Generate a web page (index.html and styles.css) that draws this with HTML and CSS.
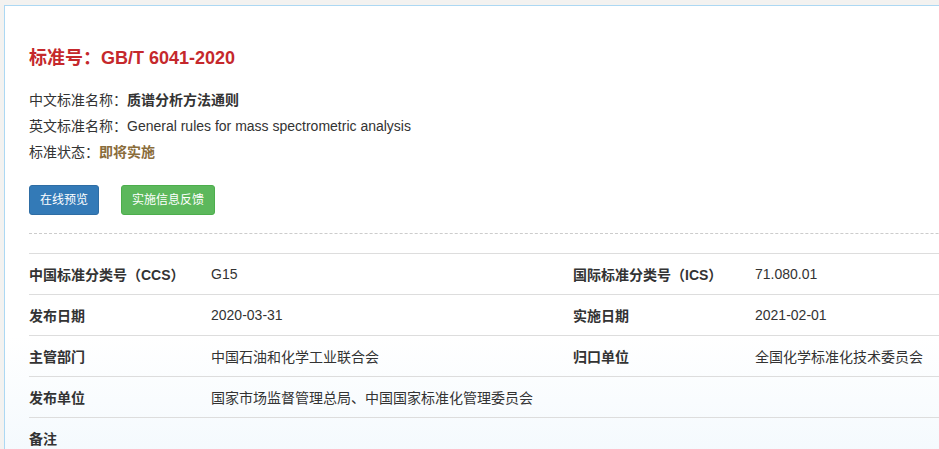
FILE: index.html
```html
<!DOCTYPE html>
<html lang="zh">
<head>
<meta charset="utf-8">
<link rel="stylesheet" href="styles.css">
</head>
<body>
<div class="page">
  <div class="panel">
    <h1 class="title">标准号：GB/T 6041-2020</h1>
    <div class="info">
      <p class="line">中文标准名称：<b>质谱分析方法通则</b></p>
      <p class="line">英文标准名称：General rules for mass spectrometric analysis</p>
      <p class="line">标准状态：<b class="status">即将实施</b></p>
    </div>
    <div class="actions">
      <a class="btn btn-blue">在线预览</a>
      <a class="btn btn-green">实施信息反馈</a>
    </div>
    <div class="dash"></div>
    <table class="meta">
      <colgroup>
        <col class="c-label"><col class="c-value"><col class="c-label"><col class="c-value">
      </colgroup>
      <tr><th>中国标准分类号（CCS）</th><td>G15</td><th>国际标准分类号（ICS）</th><td>71.080.01</td></tr>
      <tr><th>发布日期</th><td>2020-03-31</td><th>实施日期</th><td>2021-02-01</td></tr>
      <tr><th>主管部门</th><td>中国石油和化学工业联合会</td><th>归口单位</th><td>全国化学标准化技术委员会</td></tr>
      <tr><th>发布单位</th><td colspan="3">国家市场监督管理总局、中国国家标准化管理委员会</td></tr>
      <tr><th>备注</th><td colspan="3"></td></tr>
    </table>
  </div>
</div>
</body>
</html>
```

FILE: styles.css
```css
html, body {
  margin: 0;
  padding: 0;
  background: #f3f2f0;
  overflow: hidden;
}
body {
  font-family: "Liberation Sans", Arial, "Noto Sans CJK SC", sans-serif;
  font-size: 14px;
  color: #333;
}
.page {
  padding: 5px 0 0 4px;
  width: 1200px;
}
.panel {
  border-top: 1px solid #acd8f3;
  border-left: 1px solid #acd8f3;
  background: linear-gradient(to bottom, #ffffff 0px, #ffffff 330px, #f3f9fd 460px);
  padding: 40px 0 0 24px;
  min-height: 460px;
  box-sizing: border-box;
}
.title {
  margin: 0;
  font-size: 18px;
  line-height: 24px;
  font-weight: bold;
  color: #c5282c;
}
.info {
  margin-top: 17px;
}
.line {
  margin: 0;
  line-height: 26px;
  font-size: 14px;
}
.line b {
  font-weight: bold;
  color: #333;
}
.line b.status {
  color: #8a6d3b;
}
.actions {
  display: flex;
  gap: 22px;
  margin-top: 20px;
}
.btn {
  display: inline-block;
  height: 30px;
  line-height: 28px;
  padding: 0 10px;
  box-sizing: border-box;
  border: 1px solid transparent;
  border-radius: 3px;
  color: #fff;
  font-size: 12px;
}
.btn-blue {
  background: #337ab7;
  border-color: #2e6da4;
}
.btn-green {
  background: #5cb85c;
  border-color: #4cae4c;
}
.dash {
  margin-top: 18px;
  border-top: 1px dashed #cccccc;
}
.meta {
  margin-top: 19px;
  border-collapse: collapse;
  table-layout: fixed;
  width: 1088px;
}
.c-label {
  width: 182px;
}
.c-value {
  width: 362px;
}
.meta tr {
  border-top: 1px solid #dddddd;
}
.meta th, .meta td {
  height: 40px;
  padding: 0;
  text-align: left;
  vertical-align: middle;
  font-size: 14px;
  color: #333;
  white-space: nowrap;
}
.meta th {
  font-weight: bold;
}
```
